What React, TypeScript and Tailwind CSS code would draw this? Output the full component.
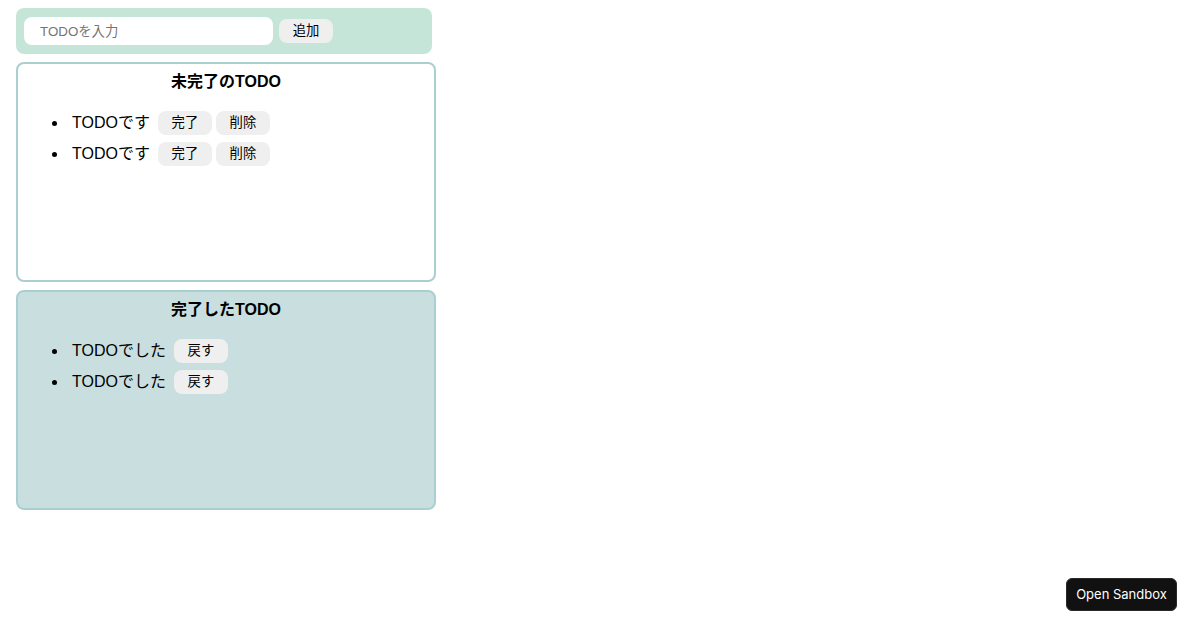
import React from "react";

const font = { fontFamily: '"Liberation Sans", "Noto Sans CJK JP", sans-serif' };

function Btn({ children }: { children: React.ReactNode }) {
  return (
    <button className="h-[24px] w-[54px] rounded-lg bg-[#efefef] text-[13.33px] text-black leading-none flex items-center justify-center shrink-0">
      {children}
    </button>
  );
}

function Row({ text, buttons }: { text: string; buttons: string[] }) {
  return (
    <li className="h-[31px] flex items-center relative">
      <span className="absolute left-[-20px] top-[14px] w-[5px] h-[5px] rounded-full bg-black" />
      <span className="text-[16px] text-black mr-2 whitespace-nowrap">{text}</span>
      <div className="flex items-center gap-1">
        {buttons.map((b, i) => (
          <Btn key={i}>{b}</Btn>
        ))}
      </div>
    </li>
  );
}

export default function App() {
  return (
    <div className="w-[1200px] h-[630px] bg-white relative" style={font}>
      <div className="pt-2 pl-4 flex flex-col gap-2">
        <div className="w-[416px] h-[46px] p-2 rounded-lg bg-[#c6e5d9] flex items-center gap-[6px]">
          <input
            className="w-[249px] h-[28px] rounded-lg bg-white px-4 text-[13.33px] outline-none placeholder:text-[#757575]"
            placeholder="TODOを入力"
          />
          <Btn>追加</Btn>
        </div>

        <div className="w-[420px] h-[220px] border-2 border-[#aacfd0] rounded-lg px-2 pt-[9px] pb-2">
          <p className="text-center font-bold text-[16px] leading-[18px] text-black">未完了のTODO</p>
          <ul className="mt-4 pl-[46px]">
            <Row text="TODOです" buttons={["完了", "削除"]} />
            <Row text="TODOです" buttons={["完了", "削除"]} />
          </ul>
        </div>

        <div className="w-[420px] h-[220px] border-2 border-[#aacfd0] bg-[#c9dede] rounded-lg px-2 pt-[9px] pb-2">
          <p className="text-center font-bold text-[16px] leading-[18px] text-black">完了したTODO</p>
          <ul className="mt-4 pl-[46px]">
            <Row text="TODOでした" buttons={["戻す"]} />
            <Row text="TODOでした" buttons={["戻す"]} />
          </ul>
        </div>
      </div>

      <button
        className="absolute right-[23px] bottom-[19px] w-[111px] h-[33px] rounded-md bg-[#111111] border border-[#2a2a2a] text-white text-[13px] flex items-center justify-center"
        style={{ fontFamily: 'Inter, "Liberation Sans", sans-serif' }}
      >
        Open Sandbox
      </button>
    </div>
  );
}
